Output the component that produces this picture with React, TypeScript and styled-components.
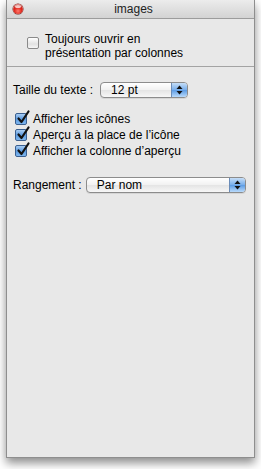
import React from 'react';
import styled, { createGlobalStyle } from 'styled-components';

const GlobalStyle = createGlobalStyle`
  html, body {
    margin: 0;
    padding: 0;
    background: #ffffff;
  }
  body {
    font-family: "Liberation Sans", Arial, sans-serif;
    color: #000;
  }
`;

const Page = styled.div`
  width: 261px;
  height: 469px;
  padding: 0 0 0 6px;
  box-sizing: border-box;
`;

const Window = styled.div`
  width: 249px;
  height: 458px;
  box-sizing: border-box;
  background: #e8e8e8;
  border: 1px solid #8e8e8e;
  border-top: none;
  box-shadow: 0 5px 9px rgba(0, 0, 0, 0.45);
  display: flex;
  flex-direction: column;
`;

const TitleBar = styled.div`
  height: 19px;
  box-sizing: border-box;
  background: linear-gradient(#ececec, #d3d3d3);
  border-bottom: 1px solid #9c9c9c;
  display: grid;
  grid-template-columns: 1fr auto 1fr;
  align-items: center;
  padding: 0 0 0 6px;
`;

const CloseButton = styled.div`
  width: 10px;
  height: 10px;
  border-radius: 50%;
  background: radial-gradient(circle at 50% 70%, #ff7b6e 0%, #e0241a 45%, #9c0b05 100%);
  box-shadow: inset 0 1px 1px rgba(255, 255, 255, 0.5), 0 0 0 0.5px #7a1c15;
  position: relative;
  &::after {
    content: '';
    position: absolute;
    left: 2px;
    top: 1px;
    width: 6px;
    height: 3px;
    border-radius: 50%;
    background: rgba(255, 255, 255, 0.75);
  }
`;

const Title = styled.div`
  font-size: 12px;
  color: #222;
`;

const TopSection = styled.div`
  height: 48px;
  box-sizing: border-box;
  padding: 13px 0 0 20px;
  border-bottom: 1px solid #a3a3a3;
`;

const Section = styled.div`
  padding: 15px 0 0 6px;
  display: flex;
  flex-direction: column;
`;

const CheckRow = styled.label<{ $top?: boolean }>`
  display: flex;
  align-items: ${(p) => (p.$top ? 'flex-start' : 'center')};
  gap: 6px;
  font-size: 12px;
  line-height: 14px;
  height: ${(p) => (p.$top ? 'auto' : '16px')};
  white-space: nowrap;
`;

const Box = styled.span<{ $checked?: boolean; $mt?: number }>`
  width: 12px;
  height: 12px;
  flex: 0 0 12px;
  box-sizing: border-box;
  border-radius: 2px;
  border: 1px solid ${(p) => (p.$checked ? '#3a5f8f' : '#8a8a8a')};
  background: ${(p) =>
    p.$checked
      ? 'linear-gradient(#a9cdf3, #5d9be0 50%, #7eb6ee)'
      : 'linear-gradient(#ffffff, #e2e2e2 60%, #f6f6f6)'};
  position: relative;
  margin-top: ${(p) => p.$mt || 0}px;
`;

const CheckMark = styled.svg`
  position: absolute;
  left: 1px;
  top: -3px;
  width: 12px;
  height: 12px;
  overflow: visible;
`;

const FieldRow = styled.div<{ $mt?: number; $gap: number }>`
  display: flex;
  align-items: center;
  gap: ${(p) => p.$gap}px;
  font-size: 12px;
  white-space: nowrap;
  margin-top: ${(p) => p.$mt || 0}px;
`;

const Popup = styled.div<{ $width: number }>`
  width: ${(p) => p.$width}px;
  flex: 0 0 auto;
  height: 16px;
  box-sizing: border-box;
  border: 1px solid #8c8c8c;
  border-radius: 4px;
  background: linear-gradient(#ffffff, #f1f1f1 50%, #e4e4e4 51%, #f7f7f7);
  display: flex;
  overflow: hidden;
  font-size: 12px;
  box-shadow: 0 1px 0 rgba(0, 0, 0, 0.08);
`;

const PopupText = styled.div`
  flex: 1;
  padding-left: 10px;
  line-height: 14px;
`;

const Stepper = styled.div`
  width: 15px;
  border-left: 1px solid #6b8cb8;
  background: linear-gradient(#c6def7, #76adeb 50%, #5b9be4 51%, #b9dafb);
  display: flex;
  align-items: center;
  justify-content: center;
`;

const Checks = styled.div`
  margin-top: 13px;
  display: flex;
  flex-direction: column;
  padding-left: 2px;
`;

const Check = ({ checked, children }: { checked?: boolean; children: React.ReactNode }) => (
  <CheckRow>
    <Box $checked={checked}>
      {checked && (
        <CheckMark viewBox="0 0 12 12">
          <path d="M1.5 7.5 L4.5 11 L11.5 0.5" fill="none" stroke="#111" strokeWidth="2.2" strokeLinecap="round" strokeLinejoin="round" />
        </CheckMark>
      )}
    </Box>
    <span>{children}</span>
  </CheckRow>
);

const Arrows = () => (
  <svg width="7" height="10" viewBox="0 0 7 10">
    <path d="M3.5 0.5 L6.5 4 L0.5 4 Z" fill="#111" />
    <path d="M3.5 9.5 L6.5 6 L0.5 6 Z" fill="#111" />
  </svg>
);

export default function App() {
  return (
    <Page>
      <GlobalStyle />
      <Window>
        <TitleBar>
          <CloseButton />
          <Title>images</Title>
          <span />
        </TitleBar>
        <TopSection>
          <CheckRow $top>
            <Box $mt={5} />
            <span>
              Toujours ouvrir en
              <br />
              présentation par colonnes
            </span>
          </CheckRow>
        </TopSection>
        <Section>
          <FieldRow $gap={7}>
            <span>Taille du texte :</span>
            <Popup $width={88}>
              <PopupText>12 pt</PopupText>
              <Stepper>
                <Arrows />
              </Stepper>
            </Popup>
          </FieldRow>
          <Checks>
            <Check checked>Afficher les icônes</Check>
            <Check checked>Aperçu à la place de l’icône</Check>
            <Check checked>Afficher la colonne d’aperçu</Check>
          </Checks>
          <FieldRow $mt={18} $gap={4}>
            <span>Rangement :</span>
            <Popup $width={160}>
              <PopupText>Par nom</PopupText>
              <Stepper>
                <Arrows />
              </Stepper>
            </Popup>
          </FieldRow>
        </Section>
      </Window>
    </Page>
  );
}
